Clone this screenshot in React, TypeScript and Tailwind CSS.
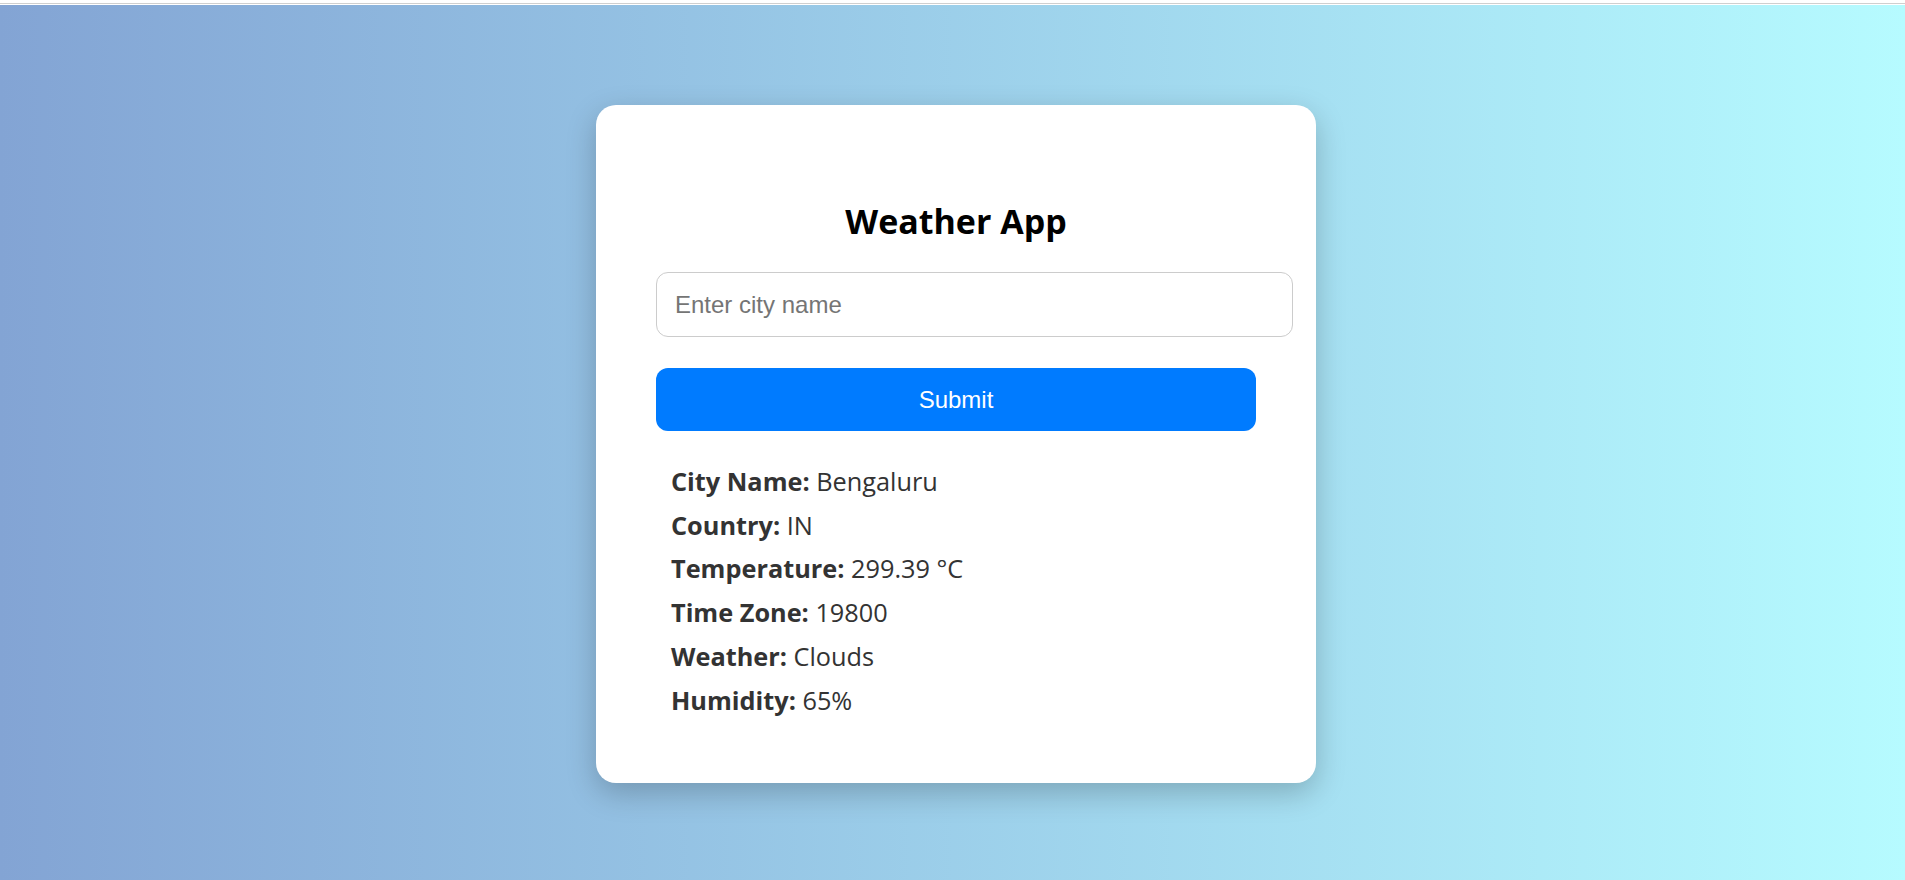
import React from 'react'

// Weather card data
const rows = [
  { label: 'City Name:', value: 'Bengaluru' },
  { label: 'Country:', value: 'IN' },
  { label: 'Temperature:', value: '299.39 °C' },
  { label: 'Time Zone:', value: '19800' },
  { label: 'Weather:', value: 'Clouds' },
  { label: 'Humidity:', value: '65%' },
]

export default function App() {
  return (
    <div className="w-full bg-white">
      {/* thin browser strip on top */}
      <div className="h-[3px] bg-white" />
      <div className="h-px bg-[#cfcfcf]" />
      <div className="h-px bg-white" />

      <div className="flex min-h-[875px] justify-center bg-gradient-to-r from-[#83a4d4] to-[#b6fbff] pl-[7px] pt-[100px]">
        <div className="h-[678px] w-[720px] rounded-[20px] bg-white px-[60px] pt-[92px] shadow-[0_10px_30px_rgba(0,0,0,0.22)]">
          <h1 className="text-center font-['Open_Sans',sans-serif] text-[34px] font-bold leading-[48px] text-black">
            Weather App
          </h1>

          <input
            type="text"
            placeholder="Enter city name"
            className="mt-[27px] box-border block h-[65px] w-[637px] rounded-[12px] border border-[#cccccc] bg-white px-[18px] font-['Liberation_Sans',Arial,sans-serif] text-[24px] text-black outline-none placeholder:text-[#757575]"
          />

          <button className="mt-[31px] block h-[63px] w-[600px] rounded-[12px] bg-[#007bff] font-['Liberation_Sans',Arial,sans-serif] text-[24px] text-white">
            Submit
          </button>

          <div className="mt-[29px] pl-[15px] font-['Open_Sans',sans-serif] text-[25.3px] text-[#333333]">
            {rows.map((r) => (
              <div key={r.label} className="leading-[43.7px]">
                <span className="font-bold">{r.label}</span> {r.value}
              </div>
            ))}
          </div>
        </div>
      </div>
    </div>
  )
}
